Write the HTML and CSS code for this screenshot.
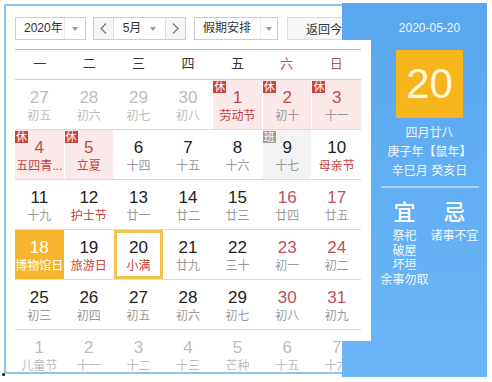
FILE: index.html
```html
<!DOCTYPE html>
<html lang="zh-CN">
<head>
    <meta charset="UTF-8">
    <title>万年历</title>
    <link rel="stylesheet" href="styles.css">
</head>
<body>
    <div class="widget">
        <div class="toolbar">
            <div class="select year">
                <span class="sel-text">2020年</span>
                <span class="sel-arrow"></span>
            </div>
            <div class="month">
                <span class="step step-prev">
                    <svg width="7" height="11" viewBox="0 0 7 11"><polyline points="6,0.5 1,5.5 6,10.5"/></svg>
                </span>
                <div class="month-sel">
                    <span class="sel-text">5月</span>
                    <span class="sel-arrow"></span>
                </div>
                <span class="step step-next">
                    <svg width="7" height="11" viewBox="0 0 7 11"><polyline points="1,0.5 6,5.5 1,10.5"/></svg>
                </span>
            </div>
            <div class="select holiday">
                <span class="sel-text">假期安排</span>
                <span class="sel-arrow"></span>
            </div>
            <button class="today-btn">返回今天</button>
        </div>

        <div class="grid">
            <div class="weekdays">
                <div>一</div><div>二</div><div>三</div><div>四</div><div>五</div>
                <div class="wkend">六</div><div class="wkend">日</div>
            </div>

            <div class="week">
                <div class="day other"><div class="num">27</div><div class="lunar">初五</div></div>
                <div class="day other"><div class="num">28</div><div class="lunar">初六</div></div>
                <div class="day other"><div class="num">29</div><div class="lunar">初七</div></div>
                <div class="day other"><div class="num">30</div><div class="lunar">初八</div></div>
                <div class="day hol"><span class="tag">休</span><div class="num">1</div><div class="lunar fest">劳动节</div></div>
                <div class="day hol"><span class="tag">休</span><div class="num">2</div><div class="lunar">初十</div></div>
                <div class="day hol"><span class="tag">休</span><div class="num">3</div><div class="lunar">十一</div></div>
            </div>

            <div class="week">
                <div class="day hol"><span class="tag">休</span><div class="num">4</div><div class="lunar fest">五四青...</div></div>
                <div class="day hol"><span class="tag">休</span><div class="num">5</div><div class="lunar fest">立夏</div></div>
                <div class="day"><div class="num">6</div><div class="lunar">十四</div></div>
                <div class="day"><div class="num">7</div><div class="lunar">十五</div></div>
                <div class="day"><div class="num">8</div><div class="lunar">十六</div></div>
                <div class="day work"><span class="tag">班</span><div class="num">9</div><div class="lunar">十七</div></div>
                <div class="day"><div class="num">10</div><div class="lunar fest">母亲节</div></div>
            </div>

            <div class="week">
                <div class="day"><div class="num">11</div><div class="lunar">十九</div></div>
                <div class="day"><div class="num">12</div><div class="lunar fest">护士节</div></div>
                <div class="day"><div class="num">13</div><div class="lunar">廿一</div></div>
                <div class="day"><div class="num">14</div><div class="lunar">廿二</div></div>
                <div class="day"><div class="num">15</div><div class="lunar">廿三</div></div>
                <div class="day wkend"><div class="num">16</div><div class="lunar">廿四</div></div>
                <div class="day wkend"><div class="num">17</div><div class="lunar">廿五</div></div>
            </div>

            <div class="week">
                <div class="day picked"><div class="num">18</div><div class="lunar">博物馆日</div></div>
                <div class="day"><div class="num">19</div><div class="lunar fest">旅游日</div></div>
                <div class="day today"><div class="num">20</div><div class="lunar fest">小满</div></div>
                <div class="day"><div class="num">21</div><div class="lunar">廿九</div></div>
                <div class="day"><div class="num">22</div><div class="lunar">三十</div></div>
                <div class="day wkend"><div class="num">23</div><div class="lunar">初一</div></div>
                <div class="day wkend"><div class="num">24</div><div class="lunar">初二</div></div>
            </div>

            <div class="week">
                <div class="day"><div class="num">25</div><div class="lunar">初三</div></div>
                <div class="day"><div class="num">26</div><div class="lunar">初四</div></div>
                <div class="day"><div class="num">27</div><div class="lunar">初五</div></div>
                <div class="day"><div class="num">28</div><div class="lunar">初六</div></div>
                <div class="day"><div class="num">29</div><div class="lunar">初七</div></div>
                <div class="day wkend"><div class="num">30</div><div class="lunar">初八</div></div>
                <div class="day wkend"><div class="num">31</div><div class="lunar">初九</div></div>
            </div>

            <div class="week">
                <div class="day other"><div class="num">1</div><div class="lunar">儿童节</div></div>
                <div class="day other"><div class="num">2</div><div class="lunar">十一</div></div>
                <div class="day other"><div class="num">3</div><div class="lunar">十二</div></div>
                <div class="day other"><div class="num">4</div><div class="lunar">十三</div></div>
                <div class="day other"><div class="num">5</div><div class="lunar">芒种</div></div>
                <div class="day other"><div class="num">6</div><div class="lunar">十五</div></div>
                <div class="day other"><div class="num">7</div><div class="lunar">十六</div></div>
            </div>
        </div>

        <div class="panel">
            <div class="p-date">2020-05-20</div>
            <div class="p-day">20</div>
            <div class="p-lunar">
                <div>四月廿八</div>
                <div>庚子年【鼠年】</div>
                <div>辛巳月 癸亥日</div>
            </div>
            <div class="p-rule"></div>
            <div class="p-yiji">
                <div class="p-col">
                    <div class="p-head">宜</div>
                    <div>祭祀</div>
                    <div>破屋</div>
                    <div>坏垣</div>
                    <div>余事勿取</div>
                </div>
                <div class="p-col">
                    <div class="p-head">忌</div>
                    <div>诸事不宜</div>
                </div>
            </div>
        </div>
    </div>
</body>
</html>
```

FILE: styles.css
```css
body {
    margin: 0;
    padding: 4px;
    font-family: "Liberation Sans", "Noto Sans CJK SC", sans-serif;
    background: #fff;
    color: #333;
}

.widget {
    position: relative;
    width: 477px;
    height: 366px;
    border: 2px solid #8fc3e7;
}

/* little dark speck at the lower left corner */
.widget::after {
    content: '';
    position: absolute;
    left: -4px;
    bottom: -4px;
    width: 3px;
    height: 3px;
    border-radius: 50%;
    background: #111;
}

/* toolbar */
.toolbar {
    display: flex;
    align-items: center;
    height: 23px;
    padding: 11px 0 0 9px;
    margin-bottom: 9px;
    font-size: 12px;
}

.select {
    display: flex;
    height: 23px;
    box-sizing: border-box;
    border: 1px solid #ccc;
    background: #fff;
    line-height: 21px;
}

.sel-text {
    flex: 1;
    padding-left: 8px;
    color: #333;
    white-space: nowrap;
}

.sel-arrow {
    position: relative;
    width: 20px;
    border-left: 1px solid #ececec;
}

.sel-arrow::after {
    content: '';
    position: absolute;
    left: 50%;
    top: 9px;
    margin-left: -3px;
    border-top: 4px solid #9a9a9a;
    border-left: 3px solid transparent;
    border-right: 3px solid transparent;
}

.year {
    width: 71px;
    margin-right: 7px;
}

.month {
    display: flex;
    width: 93px;
    height: 23px;
    box-sizing: border-box;
    border: 1px solid #ccc;
    margin-right: 8px;
    line-height: 21px;
}

.step {
    display: flex;
    align-items: center;
    justify-content: center;
    width: 19px;
    background: #f6f6f6;
}

.step svg polyline {
    fill: none;
    stroke: #777;
    stroke-width: 1.2;
}

.month-sel {
    display: flex;
    flex: 1;
    border-left: 1px solid #ddd;
    border-right: 1px solid #ddd;
    background: #fff;
}

.month-sel .sel-text {
    padding-left: 9px;
}

.month-sel .sel-arrow {
    width: 24px;
    border-left: none;
}

.holiday {
    width: 84px;
    margin-right: 9px;
}

.holiday .sel-arrow {
    width: 16px;
}

.today-btn {
    width: 90px;
    height: 23px;
    padding: 0 0 0 18px;
    text-align: left;
    border: 1px solid #ddd;
    background: #f8f8f8;
    font-family: inherit;
    font-size: 12px;
    color: #333;
}

/* calendar grid */
.grid {
    width: 346px;
    margin-left: 9px;
}

.weekdays {
    display: grid;
    grid-template-columns: repeat(7, 1fr);
    height: 31px;
    box-sizing: border-box;
    border-top: 1px solid #aebfd0;
    border-bottom: 1px solid #cfcfcf;
    text-align: center;
    font-size: 13px;
    line-height: 27px;
    color: #333;
}

.weekdays .wkend {
    color: #b5535a;
}

.week {
    display: grid;
    grid-template-columns: repeat(7, 1fr);
    column-gap: 1px;
    height: 50px;
    box-sizing: border-box;
    border-bottom: 1px solid #dcdcdc;
}

.week:last-child {
    height: 42px;
    border-bottom: none;
}

.day {
    position: relative;
    padding-top: 8px;
    text-align: center;
    overflow: hidden;
}

.num {
    font-size: 17px;
    line-height: 20px;
    color: #222;
}

.lunar {
    font-size: 12px;
    line-height: 16px;
    color: #9a9a9a;
    white-space: nowrap;
}

.lunar.fest {
    color: #c43d3f;
}

.day.wkend .num {
    color: #c0505a;
}

.day.other .num,
.day.other .lunar {
    color: #bdbdbd;
}

.day.hol {
    background: #fce9e9;
}

.day.hol .num {
    color: #c44b4b;
}

.day.work {
    background: #f3f3f3;
}

.tag {
    position: absolute;
    left: 0;
    top: 1px;
    width: 13px;
    height: 12px;
    font-size: 11px;
    line-height: 12px;
    color: #fff;
    background: #c8443c;
}

.day.work .tag {
    background: #9c9c9c;
}

.day.picked {
    background: #f6b52c;
}

.day.picked .num,
.day.picked .lunar {
    color: #fff;
}

.day.today {
    box-shadow: inset 0 0 0 3px #f1c24c;
}

/* right panel */
.panel {
    position: absolute;
    left: 336px;
    top: -3px;
    z-index: 2;
    display: flex;
    flex-direction: column;
    align-items: center;
    width: 145px;
    height: 374px;
    box-sizing: border-box;
    padding-left: 30px;
    background: linear-gradient(#59a7ee, #6cb6f8);
    color: #fff;
    text-align: center;
    clip-path: polygon(0 0, 100% 0, 100% 100%, 0 100%, 0 338px, 29px 338px, 29px 37px, 0 37px);
}

.p-date {
    margin-top: 15px;
    font-size: 12px;
    line-height: 20px;
    color: #eef6ff;
}

.p-day {
    width: 67px;
    height: 68px;
    margin-top: 12px;
    background: #f6b51b;
    font-size: 42px;
    line-height: 68px;
    color: #fff8dc;
}

.p-lunar {
    margin-top: 6px;
    font-size: 12px;
    line-height: 19px;
    color: #f2f8ff;
}

.p-rule {
    width: 98px;
    height: 2px;
    margin-top: 5px;
    background: rgba(255, 255, 255, 0.45);
}

.p-yiji {
    display: flex;
    margin-top: 12px;
}

.p-col {
    width: 50px;
    font-size: 12px;
    line-height: 14.7px;
    color: #f2f8ff;
    white-space: nowrap;
}

.p-head {
    margin-bottom: 3px;
    font-size: 22px;
    line-height: 26px;
    font-weight: 500;
    color: #fff;
}
```
